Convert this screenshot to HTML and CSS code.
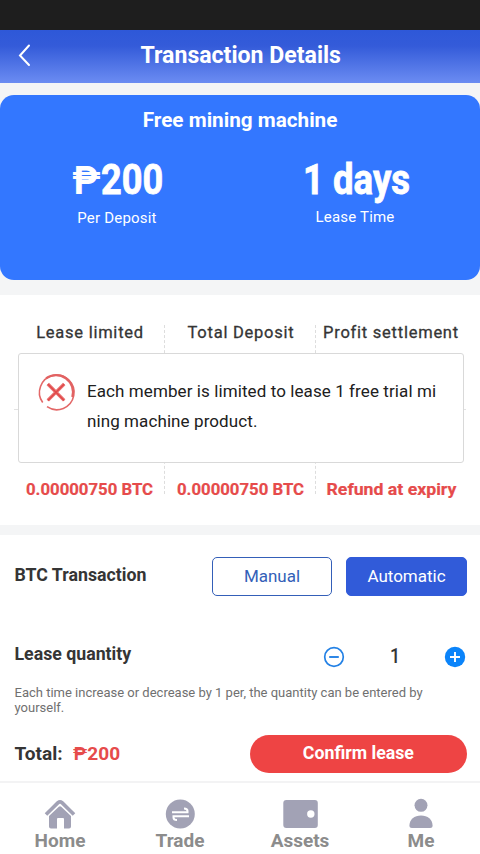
FILE: index.html
```html
<!DOCTYPE html>
<html lang="en">
<head>
<meta charset="utf-8">
<title>Transaction Details</title>
<link rel="stylesheet" href="styles.css">
</head>
<body>
<div class="status"></div>
<header class="header">
  <svg class="back" width="16" height="24" viewBox="0 0 16 24"><path d="M13 1.500 4 11.500l9 9.500" fill="none" stroke="#fff" stroke-width="2" stroke-linecap="round"/></svg>
  <h1><span class="t-title">Transaction Details</span></h1>
  <i class="spacer"></i>
</header>
<section class="hero">
  <h2><span class="t-machine">Free mining machine</span></h2>
  <div class="stats">
    <div class="stat"><div class="big"><span class="peso">₱</span><span class="amount">200</span></div><div class="caption"><span class="t-per">Per Deposit</span></div></div>
    <div class="stat right"><div class="big"><span class="days">1 days</span></div><div class="caption"><span class="t-time">Lease Time</span></div></div>
  </div>
</section>
<section class="info">
  <div class="col"><span class="label l1">Lease limited</span><span class="value v1">0.00000750 BTC</span></div>
  <div class="col"><span class="label l2">Total Deposit</span><span class="value v2">0.00000750 BTC</span></div>
  <div class="col"><span class="label l3">Profit settlement</span><span class="value v3">Refund at expiry</span></div>
  <div class="rule"></div>
  <div class="dialog">
    <svg width="38" height="38" viewBox="0 0 38 38" fill="none"><path d="M5.700 29.500A17.300 17.300 0 1 1 10 33.700" stroke="#e36868" stroke-width="1.600"/><path d="M9 5.400A17 17 0 0 1 35.300 24" stroke-width="2.200" stroke="#e26262"/><path d="m10.800 11 16.400 16.400m0-16.400-16.400 16.400" stroke-width="3.400" stroke="#ea7474"/><path d="m10.800 11 16.400 16.400m0-16.400-16.400 16.400" stroke-width="1.400" stroke="#e04848"/></svg>
    <p><span class="m1">Each member is limited to lease 1 free trial mi</span><br><span class="m2">ning machine product.</span></p>
  </div>
</section>
<main class="form">
  <div class="row mode">
    <h3><span class="t-btc">BTC Transaction</span></h3>
    <button class="btn"><span class="t-manual">Manual</span></button>
    <button class="btn active"><span class="t-auto">Automatic</span></button>
  </div>
  <div class="row quantity">
    <h3><span class="t-qty">Lease quantity</span></h3>
    <div class="stepper">
      <svg width="22" height="22" viewBox="0 0 22 22" fill="none" stroke="#2381e5"><circle cx="11" cy="11" r="9.300" stroke-width="1.700"/><path d="M6.200 11h9.600" stroke-width="1.900"/></svg>
      <span class="count">1</span>
      <svg width="22" height="22" viewBox="0 0 22 22"><circle cx="11" cy="11" r="10.200" fill="#0b84fa"/><path d="M6 11h10M11 6v10" stroke="#fff" stroke-width="1.900"/></svg>
    </div>
  </div>
  <p class="hint"><span class="h1">Each time increase or decrease by 1 per, the quantity can be entered by</span><br><span class="h2">yourself.</span></p>
  <div class="row total">
    <h3><span class="t-total">Total:</span></h3><span class="sum"><span class="t-sum">₱200</span></span>
    <button class="confirm"><span class="t-confirm">Confirm lease</span></button>
  </div>
</main>
<nav class="tabs">
  <div class="tab"><svg width="32" height="30" viewBox="0 0 32 30"><path d="M2 15.500 14 3.700q2-1.700 4 0L30 15.500" fill="none" stroke="#a2a2b5" stroke-width="3.600"/><path d="M5 16.900 14.800 7.800q1.200-1 2.400 0L27 16.900V27.500q0 2-2 2H20V20q0-1-1-1h-5q-1 0-1 1v9.500H7Q5 29.500 5 27.500z"/></svg><span>Home</span></div>
  <div class="tab"><svg width="30" height="30" viewBox="0 0 30 30"><circle cx="15.300" cy="15" r="14.500"/><path d="M7 13.300h15.500V12q0-2.500-3.500-2.500M24 17.300H8.500v1.300q0 2.500 3.500 2.500" fill="none" stroke="#fff" stroke-width="2"/></svg><span>Trade</span></div>
  <div class="tab"><svg width="36" height="30" viewBox="0 0 36 30"><rect x="1.300" y="1" width="34.500" height="28" rx="3"/><circle cx="28.800" cy="15" r="3.700" fill="#fff"/></svg><span>Assets</span></div>
  <div class="tab me"><svg width="26" height="31" viewBox="0 0 26 31"><circle cx="13" cy="6.500" r="6.700"/><path d="M1 28C1 21 6.200 17 13 17S25 21 25 28Q25 30 22.500 30H3.500Q1 30 1 28z"/></svg><span>Me</span></div>
</nav>
</body>
</html>
```
FILE: styles.css
```css
* { box-sizing: border-box; margin: 0; padding: 0; }
body { width: 480px; height: 854px; overflow: hidden; background: #f4f5f6; color: #353535; font-family: Roboto, "Noto Sans", sans-serif; }
span { display: inline-block; white-space: nowrap; }
svg { display: block; flex: none; overflow: visible; }
h1, h2, h3 { line-height: 30px; font-weight: 700; }
button { font: inherit; border: 0; }
.status { height: 30px; background: #1e1e1e; }
.header { height: 53px; display: flex; align-items: center; padding: 0 16px 2px; color: #fff; background: linear-gradient(#2e58d8, #345bd9 30%, #6b8cf2); }
.header h1 { flex: 1; text-align: center; font-size: 24px; font-weight: 700; line-height: 28px; padding-bottom: 2px; }
.t-title { transform: translateX(.5px) scaleX(.962); }
.spacer { width: 16px; }
.hero { height: 185px; margin-top: 12px; padding-top: 10px; border-radius: 14px; background: #3377ff; color: #fff; text-align: center; }
.hero h2 { font-size: 20px; }
.t-machine { transform: scaleX(1.035); }
.stats { display: flex; padding-top: 20px; }
.stat { width: 234px; }
.stat.right { width: 242px; }
.big { height: 50px; line-height: 50px; display: flex; justify-content: center; font-size: 42px; font-weight: 700; }
.peso { font-size: 38px; line-height: 52px; }
.amount { width: 61px; transform: scaleX(.86); transform-origin: 0 50%; -webkit-text-stroke: .8px #fff; }
.days { transform: translateX(2px) scaleX(.87); -webkit-text-stroke: .8px #fff; }
.caption { height: 26px; line-height: 26px; font-size: 15px; letter-spacing: .2px; }
.right .caption { line-height: 24px; }
.info { position: relative; height: 230px; margin-top: 15px; padding: 30px 14px 0 14px; background: #fff; display: grid; grid-template-columns: 151px 151px 1fr; align-items: start; }
.col { height: 169px; border-right: 1px dashed #ddd; display: flex; flex-direction: column; justify-content: space-between; align-items: center; }
.col:nth-child(3) { border: 0; }
.label { line-height: 16px; font-size: 16.5px; font-weight: 400; letter-spacing: .75px; -webkit-text-stroke: .3px #353535; }
.l1, .l2 { transform: translateX(1px); }
.value { line-height: 10px; font-size: 17px; font-weight: 700; color: #e64b4b; -webkit-text-stroke: .2px #e64b4b; }
.v1, .v2 { transform: scaleX(.985); }
.v3 { transform: scaleX(1.04); }
.rule { position: absolute; left: 14px; right: 14px; top: 114px; border-top: 1px solid #e2e2e2; }
.dialog { position: absolute; left: 18px; top: 58px; width: 446px; height: 110px; display: flex; gap: 12px; padding: 19px 0 0 18px; border: 1px solid #d9d9d9; border-radius: 3px; background: #fff; color: #202020; }
.dialog p { line-height: 30px; font-size: 17px; padding-top: 3px; letter-spacing: .09px; }
.form { height: 246px; margin-top: 10px; padding: 22px 13px 0 14px; background: #fff; }
.row { display: flex; }
.row h3 { font-size: 18px; line-height: 36px; flex: 1; }
.mode h3 span, .quantity h3 span { transform: translateX(.5px) scaleX(.985); transform-origin: 0 50%; }
.btn { width: 120px; height: 39px; padding-bottom: 2px; border: 1px solid #345fb8; border-radius: 5px; background: #fff; color: #345fb8; font-size: 17px; }
.btn.active { width: 121px; margin-left: 14px; background: #315bd9; border-color: #315bd9; color: #fff; }
.quantity { height: 40px; margin-top: 40px; }
.stepper { display: flex; align-items: center; justify-content: space-between; width: 143px; height: 42px; margin-right: 1px; }
.count { font-size: 21px; font-weight: 500; transform: translateY(-1px) scaleX(.85); }
.hint { margin-top: 9px; padding-left: .5px; font-size: 13px; line-height: 15px; color: #707070; }
.hint span { display: inline; }
.total { margin-top: 20px; height: 38px; }
.row.total h3 { flex: none; width: 59px; line-height: 38px; }
.t-total { transform: translateX(.5px) scaleX(1.06); transform-origin: 0 50%; }
.sum { flex: 1; line-height: 38px; font-size: 18px; font-weight: 700; color: #e64b4b; }
.t-sum { transform: scaleX(1.06); transform-origin: 0 50%; }
.confirm { width: 217px; height: 38px; line-height: 36px; padding-bottom: 2px; border-radius: 19px; background: #ee4444; color: #fff; font-size: 18px; font-weight: 700; }
.t-confirm { transform: scaleX(.985); }
.tabs { height: 73px; border-top: 2px solid #f3f3f4; background: #fff; display: grid; grid-template-columns: repeat(4, 1fr); padding-top: 16px; }
.tab { display: flex; flex-direction: column; align-items: center; }
.tab svg { height: 30px; fill: #a2a2b5; }
.tab span { font-size: 19px; line-height: 24px; font-weight: 700; color: #8c8c8c; }
.me { padding-left: 2px; }
```
